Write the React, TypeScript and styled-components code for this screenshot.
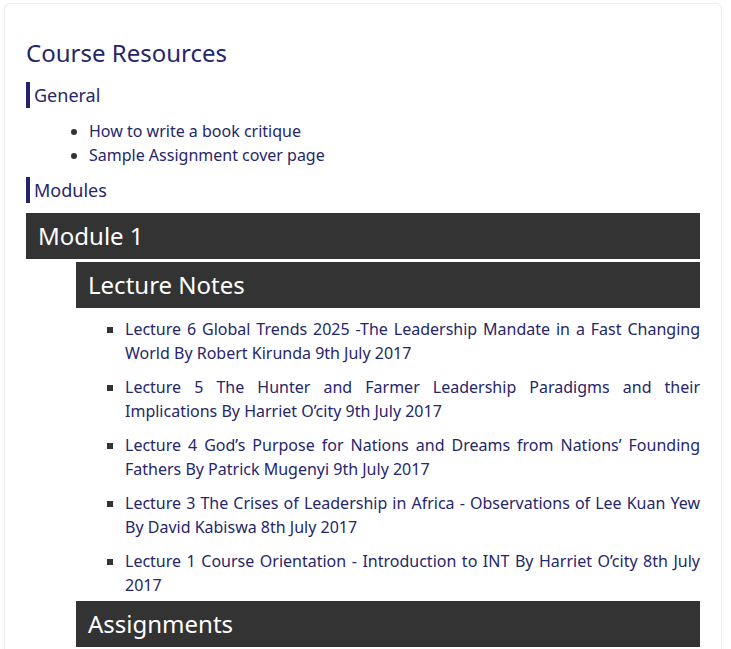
import styled, { createGlobalStyle } from 'styled-components'

const GlobalStyle = createGlobalStyle`
  body {
    margin: 0;
    background: #ffffff;
    font-family: "Noto Sans", "Open Sans", sans-serif;
  }
`

const Card = styled.div`
  background: #fff;
  border: 1px solid #ececec;
  border-radius: 6px;
  margin: 3px 9px 0 4px;
  padding: 24px 21px 40px;
  color: #26266b;
`
const Title = styled.h2`
  font-size: 24px;
  font-weight: 400;
  line-height: 34px;
  margin: 8px 0 12px;
`
const SectionLabel = styled.div`
  border-left: 4px solid #22226e;
  font-size: 18px;
  line-height: 26px;
  padding-left: 4px;
`
const BulletList = styled.ul`
  font-size: 16px;
  line-height: 24px;
  list-style: disc;
  margin: 11px 0 10px;
  padding-left: 63px;

  li::marker {
    color: #333;
  }
`
const DarkBar = styled.div<{ $gap?: number }>`
  background: #333333;
  color: #fff;
  font-size: 24px;
  height: 46px;
  line-height: 46px;
  padding-left: 12px;
  margin-top: ${p => p.$gap ?? 0}px;
`
const Indented = styled.div`
  margin-left: 50px;
`
const ModuleWrap = styled.div`
  margin-top: 10px;
`
const LectureList = styled.ul`
  list-style: square;
  margin: 9px 0 0;
  padding-left: 49px;
  font-size: 16px;
  line-height: 24px;

  li {
    text-align: justify;
    margin-bottom: 10px;
  }
  li:last-child {
    margin-bottom: 0;
  }
  li::marker {
    color: #333;
  }
`

const lectures = [
  'Lecture 6 Global Trends 2025 -The Leadership Mandate in a Fast Changing World By Robert Kirunda 9th July 2017',
  'Lecture 5 The Hunter and Farmer Leadership Paradigms and their Implications By Harriet O\u2019city 9th July 2017',
  'Lecture 4 God\u2019s Purpose for Nations and Dreams from Nations\u2019 Founding Fathers By Patrick Mugenyi 9th July 2017',
  'Lecture 3 The Crises of Leadership in Africa - Observations of Lee Kuan Yew By David Kabiswa 8th July 2017',
  'Lecture 1 Course Orientation - Introduction to INT By Harriet O\u2019city 8th July 2017',
]

const App = () => {
  return (
    <>
      <GlobalStyle />
      <Card>
        <Title>Course Resources</Title>
        <SectionLabel>General</SectionLabel>
        <BulletList>
          <li>How to write a book critique</li>
          <li>Sample Assignment cover page</li>
        </BulletList>
        <SectionLabel>Modules</SectionLabel>
        <ModuleWrap>
          <DarkBar>Module 1</DarkBar>
          <Indented>
            <DarkBar $gap={3}>Lecture Notes</DarkBar>
            <LectureList>
              {lectures.map(l => (
                <li key={l}>{l}</li>
              ))}
            </LectureList>
            <DarkBar $gap={4}>Assignments</DarkBar>
          </Indented>
        </ModuleWrap>
      </Card>
    </>
  )
}

export default App
